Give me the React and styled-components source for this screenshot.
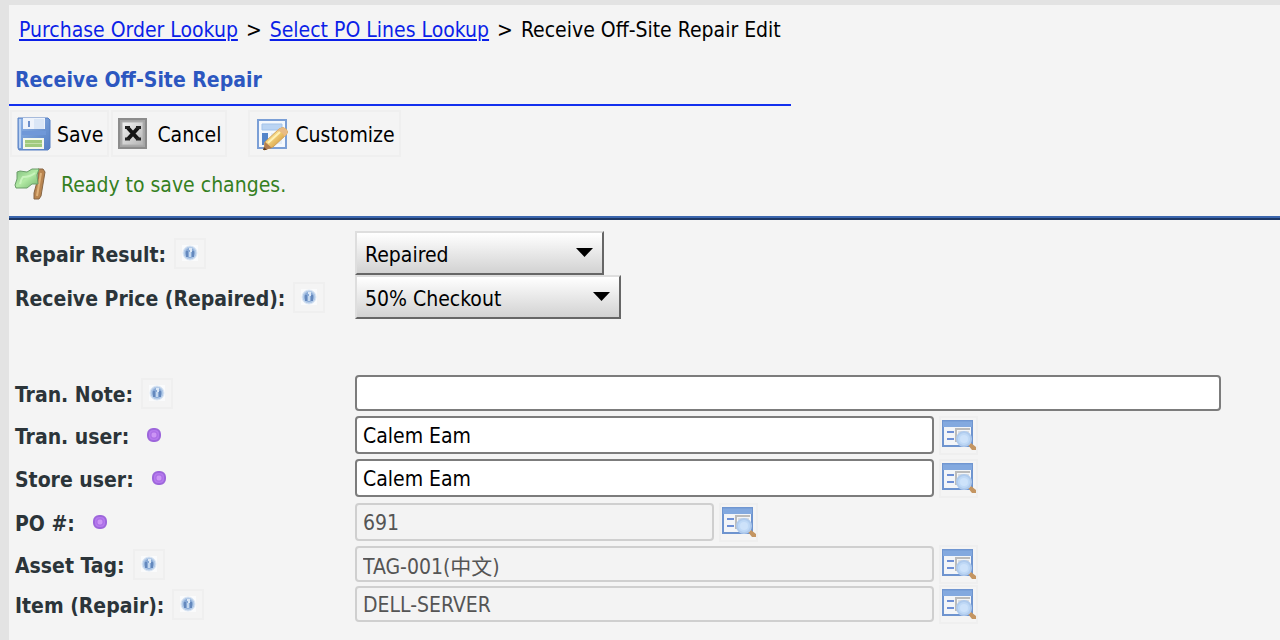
import React, { useState } from 'react';
import styled, { createGlobalStyle, css } from 'styled-components';

const GlobalStyle = createGlobalStyle`
  *, *::before, *::after {
    box-sizing: border-box;
  }

  body {
    margin: 0;
    background: #e3e3e3;
    color: #000;
    font-family: 'DejaVu Sans Condensed', 'Noto Sans', 'Noto Sans CJK SC', sans-serif;
    font-size: 21px;
    line-height: 28px;
  }

  button, input, select {
    font: inherit;
    color: inherit;
  }
`;

// Page frame
const Page = styled.main`
  min-height: 100vh;
  padding: 5px 0 0 9px;
`;

const Panel = styled.div`
  min-height: calc(100vh - 5px);
  background: #f4f4f4;
`;

const Header = styled.header`
  width: fit-content;
  padding-bottom: 10px;
  border-bottom: 2px solid #1230ee;
`;

const Breadcrumb = styled.nav`
  display: flex;
  gap: 8px;
  padding: 11px 10px 0;
  white-space: nowrap;

  a {
    color: #0b1fe8;
    text-decoration-thickness: 2px;
    text-underline-offset: 2px;
    text-decoration-skip-ink: auto;
  }
`;

const Title = styled.h1`
  margin: 22px 0 0;
  padding-left: 6px;
  color: #2c57c0;
  font-size: 21px;
  line-height: 28px;
`;

// Toolbar
const Toolbar = styled.div`
  display: flex;
  gap: 2px;
  padding: 4px 0 0 1px;
`;

const ToolButton = styled.button`
  display: flex;
  align-items: center;
  gap: ${props => props.$gap || 6}px;
  height: 47px;
  margin-left: ${props => (props.$apart ? 19 : 0)}px;
  padding: 0 4px 0 5px;
  border: 2px solid #efefef;
  background: transparent;

  span {
    padding-top: 3px;
  }
`;

const Message = styled.p`
  display: flex;
  align-items: center;
  gap: 15px;
  margin: 0;
  padding: 10px 0 15px 5px;
  color: #35801f;

  span {
    padding-top: 2px;
  }
`;

const Rule = styled.hr`
  height: 4px;
  margin: 0;
  border: 0;
  border-top: 2px solid #3b66ae;
  background: #1d3765;
`;

// Form
const Form = styled.form`
  padding: 11px 59px 14px 6px;
`;

const Group = styled.div`
  & + & {
    margin-top: 53px;
  }
`;

const Row = styled.div`
  display: grid;
  grid-template-columns: 340px minmax(0, 1fr);
  align-items: center;
  min-height: ${props => props.$height}px;
`;

const LabelCell = styled.div`
  display: flex;
  align-items: center;
  gap: 8px;
  color: #2b3439;
  font-weight: bold;
  white-space: nowrap;

  label {
    padding-top: 3px;
  }
`;

const HelpButton = styled.button`
  display: flex;
  align-items: center;
  justify-content: center;
  width: 32px;
  height: 31px;
  padding: 0;
  border: 2px solid #efefef;
  background: transparent;
`;

const Required = styled.span`
  display: flex;
  padding-left: 10px;
`;

const FieldCell = styled.div`
  display: flex;
  align-items: center;
  gap: 5px;
`;

const TextInput = styled.input`
  flex: 0 1 ${props => props.$width || '100%'};
  min-width: 0;
  height: ${props => props.$height}px;
  padding: 2px 6px 0;
  border: 2px solid #7c7c7c;
  border-radius: 4px;
  background: #fff;
  outline: none;

  ${props => props.disabled && css`
    padding: 1px 6px 0;
    border-color: #cfcfcf;
    background: #f3f3f3;
    color: #555;
  `}
`;

const LookupButton = styled.button`
  flex: none;
  display: flex;
  align-items: center;
  justify-content: center;
  width: 39px;
  height: 39px;
  padding: 0;
  border: 2px solid #efefef;
  background: transparent;
`;

const SelectBox = styled.div`
  display: grid;
  grid-template-columns: minmax(0, 1fr) 17px 11px;
  align-items: center;
  width: ${props => props.$width}px;
  max-width: 100%;

  select {
    grid-area: 1 / 1 / 2 / 4;
    height: 44px;
    padding: 4px 32px 0 8px;
    appearance: none;
    border: 2px solid;
    border-color: #dedede #666 #666 #dedede;
    border-radius: 0;
    background: linear-gradient(#fff, #d2d2d2);
    outline: none;
  }

  svg {
    grid-area: 1 / 2;
    pointer-events: none;
  }
`;

const SaveIcon = () => (
  <svg width="34" height="34" viewBox="0 0 34 34" aria-hidden="true">
    <defs>
      <linearGradient id="disk" x1="0" y1="0" x2="1" y2="1">
        <stop offset="0" stopColor="#8fb4e6" />
        <stop offset="1" stopColor="#557fc4" />
      </linearGradient>
    </defs>
    <path d="M1 1h30l2 2v28l-2 2H2l-1-2z" fill="url(#disk)" stroke="#5880c3" />
    <path d="M3 2v29" stroke="#b8d0f2" strokeWidth="2" />
    <path d="M6 1h22v11H6z" fill="#eef3fb" />
    <path d="M11 4h2v6h-2z" fill="#6d8fca" />
    <path d="M17 2h10v10H17z" fill="#dae6f6" />
    <path d="M5 14h24v4H5z" fill="#7098d8" />
    <path d="M6 21h21v11H6z" fill="#f4f8ec" />
    <path d="M8 23h17v3H8zM8 27h17v3H8z" fill="#a0ca7d" />
    <path d="M8 26.500h17" stroke="#c4dfab" />
  </svg>
);

const CancelIcon = () => (
  <svg width="30" height="32" viewBox="0 0 30 32" aria-hidden="true">
    <defs>
      <linearGradient id="metal" x1="0" y1="0" x2="1" y2="1">
        <stop offset="0" stopColor="#f4f4f4" />
        <stop offset="1" stopColor="#b4b4b4" />
      </linearGradient>
    </defs>
    <path d="M1 1h27v29H1z" fill="#a5a5a5" stroke="#8c8c8c" strokeWidth="2" />
    <path d="M4 4h21v23H4z" fill="url(#metal)" stroke="#b0b0b0" />
    <path d="M10 10l10 11M20 10L10 21" stroke="#151515" strokeWidth="4" />
    <path d="M7 9.500h5M18 9.500h5M7 21h5M18 21h5" stroke="#222" strokeWidth="3" />
  </svg>
);

const CustomizeIcon = () => (
  <svg width="34" height="34" viewBox="0 0 34 34" aria-hidden="true">
    <defs>
      <linearGradient id="pencil" x1="0" y1="0" x2="1" y2="1">
        <stop offset="0.250" stopColor="#ffe99a" />
        <stop offset="0.700" stopColor="#dba548" />
      </linearGradient>
    </defs>
    <path d="M3 3h28v28H3z" fill="#f4f8fd" stroke="#7b9fd6" strokeWidth="2" />
    <path d="M7 7h20v6H7z" fill="#bad4f3" stroke="#a3c3ea" />
    <path d="M7 16h6v12H7z" fill="#5485ca" />
    <path d="M16 16h11v11H16z" fill="#e4edf7" />
    <path d="M10 25L24 12q4-3 7 0t0 6L18 30l-9 3z" fill="url(#pencil)" stroke="#d0a258" />
    <path d="M24 12q4-3 7 0t0 6l-2 2q0-5-7-6z" fill="#e9bb85" />
    <path d="M13 26L25 15" stroke="#fff1b5" strokeWidth="2" />
    <path d="M10 25l7 6-8 2z" fill="#b27d50" />
    <path d="M9 30l3 3H8z" fill="#604026" />
  </svg>
);

const FlagIcon = () => (
  <svg width="32" height="34" viewBox="0 0 32 34" aria-hidden="true">
    <defs>
      <linearGradient id="cloth" x1="0" y1="0" x2="1" y2="1">
        <stop offset="0" stopColor="#7ebd7b" />
        <stop offset="0.500" stopColor="#b3eaa5" />
        <stop offset="1" stopColor="#71b46c" />
      </linearGradient>
    </defs>
    <path d="M24 2h5l2 3-4 24-2 3h-5v-6l4-15z" fill="#b98550" stroke="#866544" />
    <path d="M27 6l-4 23" stroke="#dfb27b" strokeWidth="2" />
    <path d="M3 5l3-1 7 1 5-3h7l-2 6 1 9h-6l-5 4H2l-1-3 2-6z" fill="url(#cloth)" stroke="#6a9d69" />
    <path d="M6 17q1-5 3-7 7 0 12-4" stroke="#c9f3bd" strokeWidth="2" fill="none" />
  </svg>
);

const HelpIcon = () => (
  <svg width="18" height="18" viewBox="0 0 18 18" aria-hidden="true">
    <path d="M1 1h16v16H1z" fill="#fafbfc" />
    <circle cx="9" cy="9" r="7" fill="#b4cbe8" stroke="#dce7f4" />
    <circle cx="9" cy="9" r="5" fill="#88a9d5" />
    <path d="M6 7v6M12 7v6" stroke="#6488bd" strokeWidth="2" />
    <path d="M8 5h2v3" stroke="#dce8f6" strokeWidth="2" fill="none" />
    <path d="M9 8v5" stroke="#c5d8ee" strokeWidth="2" />
  </svg>
);

const RequiredIcon = () => (
  <svg width="14" height="14" viewBox="0 0 14 14" aria-hidden="true">
    <rect x="1" y="1" width="12" height="12" rx="5" fill="#b579ed" stroke="#9d66db" strokeWidth="2" />
    <rect x="4" y="4" width="6" height="6" rx="2" fill="#cc95f5" stroke="#a868e5" />
  </svg>
);

const LookupIcon = () => (
  <svg width="34" height="32" viewBox="0 0 34 32" aria-hidden="true">
    <path d="M1 2h29v25H1z" fill="#f3f5f8" stroke="#6e94cf" strokeWidth="2" />
    <path d="M1 2h29v6H1z" fill="#83a9df" />
    <path d="M1 2h29" stroke="#7399d3" />
    <path d="M5 13h7M5 20h7" stroke="#6d8fd6" strokeWidth="2" />
    <path d="M14 23V10h14" stroke="#bbb" strokeWidth="2" fill="none" />
    <path d="M16 13h11" stroke="#ddd" strokeWidth="2" />
    <path d="M26 26l3-2 5 4v3h-4z" fill="#c49561" />
    <circle cx="22" cy="20" r="7" fill="#bfd9f6" stroke="#b0cbed" strokeWidth="2" />
    <circle cx="22" cy="20" r="4" fill="#cde2fa" />
  </svg>
);

const ArrowIcon = () => (
  <svg width="17" height="10" viewBox="0 0 17 10" aria-hidden="true">
    <path d="M0 0h17L8.500 9z" fill="#000" />
  </svg>
);

const LabelWithHint = ({ id, label, required }) => (
  <LabelCell>
    <label htmlFor={id}>{label}</label>
    {required
      ? <Required title="Required"><RequiredIcon /></Required>
      : <HelpButton type="button" aria-label={`Help for ${label}`}><HelpIcon /></HelpButton>}
  </LabelCell>
);

const selects = [
  { id: 'result', label: 'Repair Result:', width: 249, options: ['Repaired'] },
  { id: 'price', label: 'Receive Price (Repaired):', width: 266, options: ['50% Checkout'] },
];

const fields = [
  { id: 'note', label: 'Tran. Note:', row: 42, height: 36 },
  { id: 'tranUser', label: 'Tran. user:', row: 42, height: 38, width: '579px', required: true, lookup: true },
  { id: 'storeUser', label: 'Store user:', row: 44, height: 38, width: '579px', required: true, lookup: true },
  { id: 'po', label: 'PO #:', row: 44, height: 38, width: '359px', required: true, lookup: true, disabled: true },
  { id: 'asset', label: 'Asset Tag:', row: 40, height: 36, width: '579px', lookup: true, disabled: true },
  { id: 'item', label: 'Item (Repair):', row: 40, height: 36, width: '579px', lookup: true, disabled: true },
];

export default function App() {
  const [values, setValues] = useState({
    note: '',
    tranUser: 'Calem Eam',
    storeUser: 'Calem Eam',
    po: '691',
    asset: 'TAG-001(中文)',
    item: 'DELL-SERVER',
  });

  const handleChange = e => setValues({ ...values, [e.target.id]: e.target.value });

  return (
    <Page>
      <GlobalStyle />
      <Panel>
        <Header>
          <Breadcrumb>
            <a href="#orders">Purchase Order Lookup</a>
            <span>&gt;</span>
            <a href="#lines">Select PO Lines Lookup</a>
            <span>&gt;</span>
            <span>Receive Off-Site Repair Edit</span>
          </Breadcrumb>
          <Title>Receive Off-Site Repair</Title>
        </Header>
        <Toolbar>
          <ToolButton type="submit" form="repair"><SaveIcon /><span>Save</span></ToolButton>
          <ToolButton type="button" $gap={9}><CancelIcon /><span>Cancel</span></ToolButton>
          <ToolButton type="button" $apart><CustomizeIcon /><span>Customize</span></ToolButton>
        </Toolbar>
        <Message><FlagIcon /><span>Ready to save changes.</span></Message>
        <Rule />
        <Form id="repair" onSubmit={e => e.preventDefault()}>
          <Group>
            {selects.map(s => (
              <Row key={s.id} $height={44}>
                <LabelWithHint id={s.id} label={s.label} />
                <SelectBox $width={s.width}>
                  <select id={s.id}>
                    {s.options.map(o => <option key={o}>{o}</option>)}
                  </select>
                  <ArrowIcon />
                </SelectBox>
              </Row>
            ))}
          </Group>
          <Group>
            {fields.map(f => (
              <Row key={f.id} $height={f.row}>
                <LabelWithHint id={f.id} label={f.label} required={f.required} />
                <FieldCell>
                  <TextInput
                    id={f.id}
                    type="text"
                    value={values[f.id]}
                    onChange={handleChange}
                    disabled={f.disabled}
                    $width={f.width}
                    $height={f.height}
                  />
                  {f.lookup && (
                    <LookupButton type="button" aria-label={`Look up ${f.label}`}><LookupIcon /></LookupButton>
                  )}
                </FieldCell>
              </Row>
            ))}
          </Group>
        </Form>
      </Panel>
    </Page>
  );
}
